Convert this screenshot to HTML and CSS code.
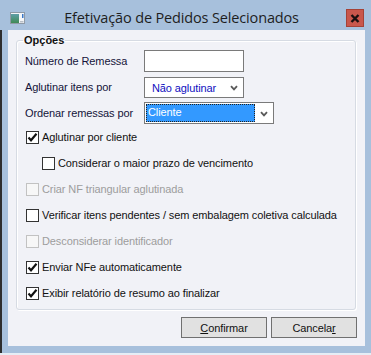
FILE: index.html
```html
<!DOCTYPE html>
<html lang="pt">
<head>
<meta charset="utf-8">
<title>Efetivação de Pedidos Selecionados</title>
<link rel="stylesheet" href="styles.css">
</head>
<body>
<div class="window">
  <div class="titlebar">
    <svg class="app-icon" width="15" height="12" viewBox="0 0 15 12">
      <defs>
        <linearGradient id="g1" x1="0" y1="0" x2="0" y2="1">
          <stop offset="0" stop-color="#5f9fa8"/>
          <stop offset="1" stop-color="#3f8a55"/>
        </linearGradient>
      </defs>
      <rect x="0.5" y="0.5" width="14" height="11" fill="#f4f6f8" stroke="#8f9aa6"/>
      <rect x="1" y="2" width="8" height="9" fill="url(#g1)"/>
      <rect x="12" y="2" width="1.5" height="4" fill="#3a78c8"/>
      <rect x="10" y="9" width="3.5" height="1.5" fill="#b8bec6"/>
    </svg>
    <div class="title">Efetivação de Pedidos Selecionados</div>
    <div class="close-btn">
      <svg width="10" height="9" viewBox="0 0 10 9">
        <path d="M1.5 1 L8.5 8 M8.5 1 L1.5 8" stroke="#1a1010" stroke-width="2.4" fill="none"/>
      </svg>
    </div>
  </div>
  <div class="mid">
    <div class="behind-edge"></div>
    <div class="client">
      <fieldset class="group">
        <legend class="group-title">Opções</legend>
        <div class="field-row">
          <span class="field-label">Número de Remessa</span>
          <div class="textbox"></div>
        </div>
        <div class="field-row">
          <span class="field-label">Aglutinar itens por</span>
          <div class="select select-narrow">
            <span class="select-value">Não aglutinar</span>
            <svg class="chevron" width="8" height="6" viewBox="0 0 8 6"><path d="M1 1.2 L4 4.4 L7 1.2" stroke="#5a5a5a" stroke-width="1.8" fill="none"/></svg>
          </div>
        </div>
        <div class="field-row last">
          <span class="field-label">Ordenar remessas por</span>
          <div class="select select-wide">
            <span class="select-value selected">Cliente</span>
            <svg class="chevron" width="8" height="6" viewBox="0 0 8 6"><path d="M1 1.2 L4 4.4 L7 1.2" stroke="#5a5a5a" stroke-width="1.8" fill="none"/></svg>
          </div>
        </div>
        <div class="check-row">
          <span class="box"><svg width="11" height="11" viewBox="0 0 11 11"><path d="M1.5 5.5 L4 8.3 L9.5 1.8" stroke="#111" stroke-width="2.1" fill="none"/></svg></span>
          <span class="check-label">Aglutinar por cliente</span>
        </div>
        <div class="check-row indent">
          <span class="box"></span>
          <span class="check-label">Considerar o maior prazo de vencimento</span>
        </div>
        <div class="check-row disabled">
          <span class="box"></span>
          <span class="check-label">Criar NF triangular aglutinada</span>
        </div>
        <div class="check-row">
          <span class="box"></span>
          <span class="check-label">Verificar itens pendentes / sem embalagem coletiva calculada</span>
        </div>
        <div class="check-row disabled">
          <span class="box"></span>
          <span class="check-label">Desconsiderar identificador</span>
        </div>
        <div class="check-row">
          <span class="box"><svg width="11" height="11" viewBox="0 0 11 11"><path d="M1.5 5.5 L4 8.3 L9.5 1.8" stroke="#111" stroke-width="2.1" fill="none"/></svg></span>
          <span class="check-label">Enviar NFe automaticamente</span>
        </div>
        <div class="check-row">
          <span class="box"><svg width="11" height="11" viewBox="0 0 11 11"><path d="M1.5 5.5 L4 8.3 L9.5 1.8" stroke="#111" stroke-width="2.1" fill="none"/></svg></span>
          <span class="check-label">Exibir relatório de resumo ao finalizar</span>
        </div>
      </fieldset>
      <div class="buttons">
        <button class="btn" type="button"><u>C</u>onfirmar</button>
        <button class="btn" type="button">Cancela<u>r</u></button>
      </div>
    </div>
  </div>
  <div class="bottom-line"></div>
</div>
</body>
</html>
```

FILE: styles.css
```css
* { box-sizing: border-box; }

html, body {
  margin: 0;
  padding: 0;
}

body {
  width: 371px;
  height: 355px;
  overflow: hidden;
  background: #a7c0dc;
  font-family: "Liberation Sans", Arial, sans-serif;
  font-size: 11px;
  letter-spacing: -0.1px;
  color: #111;
}

.window {
  width: 371px;
  height: 355px;
  display: flex;
  flex-direction: column;
  background: #a7c0dc;
}

.titlebar {
  height: 30px;
  display: flex;
  align-items: center;
  padding-left: 10px;
  padding-right: 7px;
}

.app-icon {
  flex: none;
  margin-top: 5px;
}

.title {
  flex: 1;
  text-align: center;
  font-family: "Open Sans", "Liberation Sans", sans-serif;
  font-size: 14.5px;
  letter-spacing: -0.15px;
  color: #1e1e1e;
  padding-right: 8px;
  padding-top: 4px;
}

.close-btn {
  flex: none;
  width: 18px;
  height: 18px;
  margin-top: 6px;
  background: #c9574c;
  border: 1px solid #a54237;
  display: flex;
  align-items: center;
  justify-content: center;
}

.mid {
  height: 323px;
  display: flex;
}

.behind-edge {
  width: 2px;
  background: #2d2d2d;
}

.client {
  margin-left: 6px;
  width: 357px;
  height: 316px;
  background: #f1f2f7;
  padding: 0 9px 0 8px;
  display: flex;
  flex-direction: column;
}

.group {
  margin: 4px 0 0 0;
  padding: 3px 8px 3px 8px;
  border: 1px solid #d6dbe3;
  border-radius: 3px;
  box-shadow: 1px 1px 0 #ffffff, inset 1px 1px 0 #ffffff;
  min-inline-size: 0;
}

.group-title {
  font-weight: bold;
  line-height: 13px;
  padding: 0 1px;
  margin-left: -2px;
  color: #111;
  letter-spacing: 0;
}

.field-row {
  height: 22px;
  display: flex;
  align-items: center;
  margin-bottom: 4px;
}

.field-row.last {
  margin-bottom: 0;
}

.field-label {
  width: 119px;
  flex: none;
  color: #14143a;
}

.textbox {
  width: 100px;
  height: 22px;
  background: #fff;
  border: 1px solid #7a7a7a;
}

.select {
  height: 22px;
  background: #fff;
  border: 1px solid #7a7a7a;
  display: flex;
  align-items: center;
  justify-content: space-between;
  padding: 1px 5px 0 1px;
}

.select-narrow {
  width: 100px;
  height: 21px;
}

.select-wide {
  width: 130px;
}

.select-value {
  color: #1010c0;
  padding-left: 6px;
}

.select-value.selected {
  width: 109px;
  height: 18px;
  padding-left: 2px;
  background: #3399ff;
  color: #fff;
  outline: 1px dotted #222;
  outline-offset: -1px;
  line-height: 17px;
  margin-top: -1px;
}

.chevron {
  flex: none;
}

.check-row {
  height: 26px;
  display: flex;
  align-items: center;
}

.check-row .box {
  width: 13px;
  height: 13px;
  margin-left: 1px;
  margin-right: 3px;
  background: #fff;
  border: 1px solid #333;
  display: flex;
  align-items: center;
  justify-content: center;
  flex: none;
}

.check-row.indent {
  padding-left: 16px;
}

.check-row.disabled .box {
  border-color: #c2c2c2;
  background: #f7f7f7;
}

.check-row.disabled .check-label {
  color: #9d9d9d;
}

.buttons {
  margin-top: 7px;
  display: flex;
  justify-content: flex-end;
  gap: 4px;
  margin-right: -1px;
}

.btn {
  width: 86px;
  height: 21px;
  padding: 0;
  background: #e1e1e1;
  border: 1px solid #707070;
  font-family: "Liberation Sans", Arial, sans-serif;
  font-size: 11px;
  letter-spacing: -0.1px;
  color: #111;
}

.bottom-line {
  height: 2px;
  background: #e6edf5;
}
```
